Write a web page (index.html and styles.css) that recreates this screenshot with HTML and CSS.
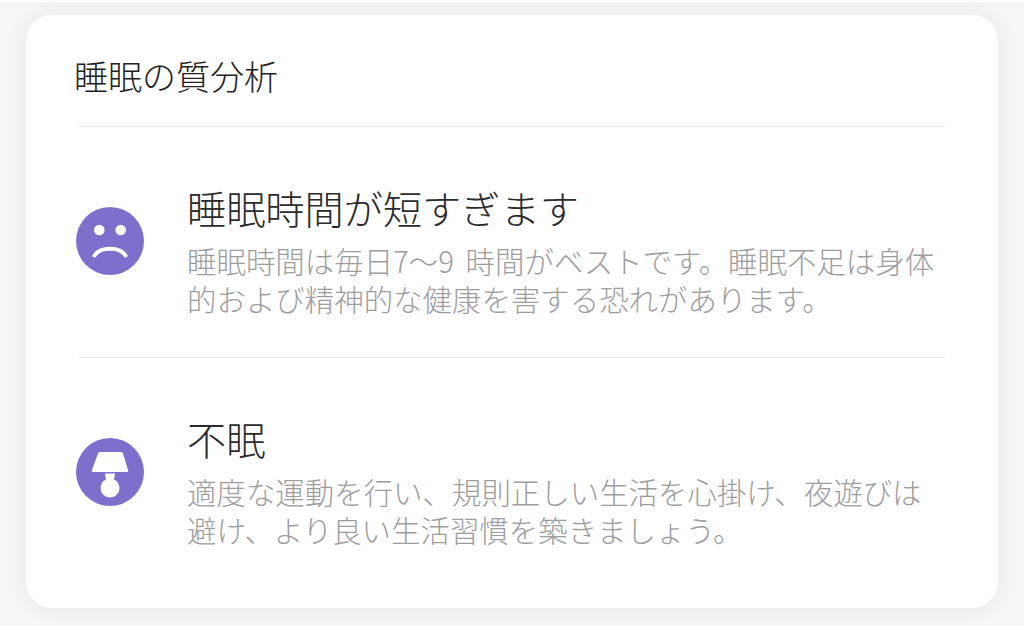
FILE: index.html
```html
<!DOCTYPE html>
<html lang="ja">
<head>
    <meta charset="utf-8">
    <title>睡眠の質分析</title>
    <link rel="stylesheet" href="styles.css">
</head>
<body>
    <div class="card">
        <h1 class="card-title">睡眠の質分析</h1>
        <div class="row">
            <svg class="icon" viewBox="0 0 68 68">
                <circle cx="34" cy="34" r="34" fill="#7f6fcd"/>
                <circle cx="23.300" cy="23" r="5.300" fill="#fff"/>
                <circle cx="44.700" cy="23" r="5.300" fill="#fff"/>
                <path d="M18.500 48.500 C24 39.500 44 39.500 49.500 48.500" fill="none" stroke="#fff" stroke-width="4" stroke-linecap="round"/>
            </svg>
            <div class="row-text">
                <h2 class="row-title">睡眠時間が短すぎます</h2>
                <p class="row-desc">睡眠時間は毎日7〜9 時間がベストです。睡眠不足は身体的および精神的な健康を害する恐れがあります。</p>
            </div>
        </div>
        <div class="row">
            <svg class="icon" viewBox="0 0 68 68">
                <circle cx="34" cy="34" r="34" fill="#7f6fcd"/>
                <path d="M24 14 H45 C46 14 46.500 14.500 47 15.500 L52 32 C52.500 33.500 52 34 50.500 34 H17.500 C16 34 15.500 33.500 16 32 L22 15.500 C22.500 14.500 23 14 24 14 Z" fill="#fff"/>
                <path d="M29 35.500 H39 L38 42 H30 Z" fill="#fff"/>
                <circle cx="34" cy="50" r="9.500" fill="#fff"/>
            </svg>
            <div class="row-text">
                <h2 class="row-title">不眠</h2>
                <p class="row-desc">適度な運動を行い、規則正しい生活を心掛け、夜遊びは避け、より良い生活習慣を築きましょう。</p>
            </div>
        </div>
    </div>
</body>
</html>
```

FILE: styles.css
```css
html, body {
    height: 100%;
}
body {
    margin: 0;
    padding: 13px 26px 18px;
    box-sizing: border-box;
    background: #f4f5f6;
    border-top: 2px solid #fff;
    font-family: "Noto Sans CJK JP", "Noto Sans", sans-serif;
    font-weight: 300;
    overflow: hidden;
}
.card {
    height: 593px;
    box-sizing: border-box;
    background: #fff;
    border-radius: 26px;
    box-shadow: 0 0 22px rgba(40, 40, 60, 0.06);
    padding: 0 53px 0 49px;
}
.card-title {
    margin: 0 0 0 4px;
    height: 112px;
    display: flex;
    align-items: center;
    font-size: 34px;
    font-weight: 300;
    color: #222;
    border-bottom: 1px solid #e8e8ea;
    text-indent: -5px;
    padding-top: 10px;
    box-sizing: border-box;
}
.row {
    display: flex;
    align-items: center;
    gap: 43px;
    height: 230px;
    border-bottom: 1px solid #e8e8ea;
    margin-left: 4px;
}
.row:last-child {
    border-bottom: none;
}
.icon {
    width: 68px;
    height: 68px;
    flex: none;
    margin: -3px 0 0 -3px;
}
.row-text {
    flex: 1;
    padding-top: 16px;
}
.row-title {
    margin: 0;
    font-size: 39.200px;
    line-height: 48px;
    font-weight: 300;
    color: #2b2b2b;
}
.row-desc {
    margin: 10px 0 0;
    font-size: 29.450px;
    line-height: 38px;
    word-spacing: 5px;
    color: #9d9d9f;
}
```
